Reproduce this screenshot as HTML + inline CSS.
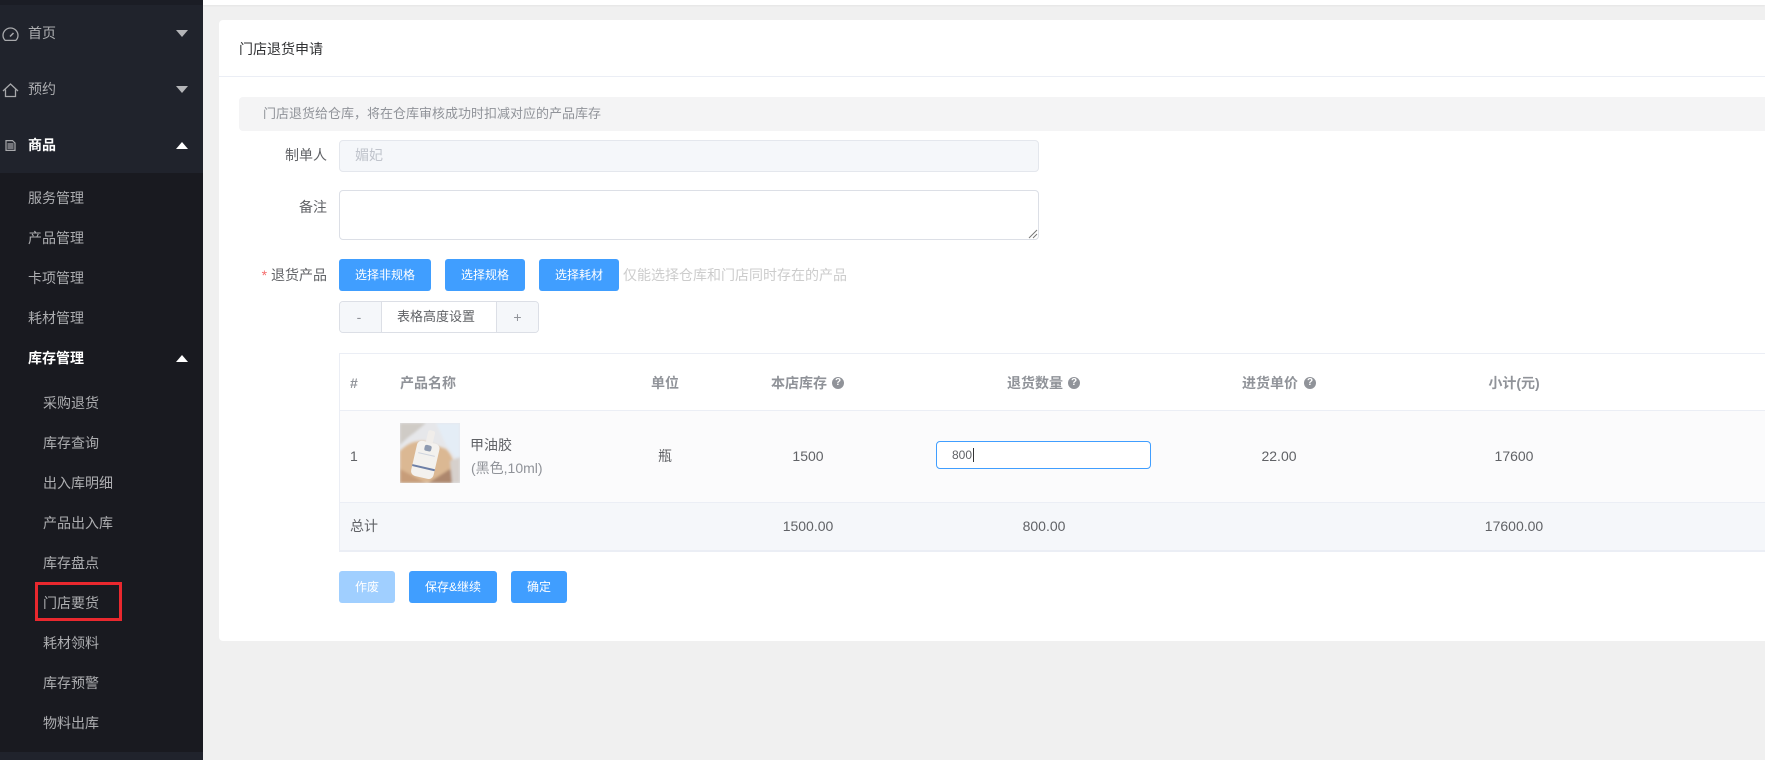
<!DOCTYPE html>
<html lang="zh-CN">
<head>
<meta charset="utf-8">
<title>门店退货申请</title>
<style>
html,body{margin:0;padding:0;width:1765px;height:760px;overflow:hidden;background:#f0f0f0;font-family:"Liberation Sans","Noto Sans CJK SC",sans-serif;font-size:14px;color:#606266}
*{box-sizing:border-box}
.a{position:absolute;white-space:nowrap}
.t{position:absolute;white-space:nowrap;line-height:20px;height:20px}
.c{transform:translateX(-50%)}
#side{position:absolute;left:0;top:0;width:203px;height:760px;background:#20232c;overflow:hidden}
#sub{position:absolute;left:0;top:173px;width:203px;height:579px;background:#191a20}
#side .t{color:#adaeb1;font-size:14px}
.arr{position:absolute;left:176px;width:0;height:0;border-left:6px solid transparent;border-right:6px solid transparent}
.dn{border-top:7px solid #b4b5b8}
.up{border-bottom:7px solid #fff}
.btn{position:absolute;background:#409eff;color:#fff;border-radius:3px;font-size:12px;text-align:center;line-height:32px;height:32px;white-space:nowrap}
.q{position:absolute;width:12px;height:12px;border-radius:50%;background:#909399;color:#fff;font-size:10px;font-weight:bold;line-height:12px;text-align:center;font-family:"Liberation Sans",sans-serif}
.th{font-weight:bold;color:#909399;font-size:14px}
</style>
</head>
<body>
<div class="a" style="left:203px;top:0;width:1562px;height:5px;background:#fff;box-shadow:0 1px 2px rgba(0,0,0,.05)"></div>

<div id="side">
  <div class="a" style="left:0;top:0;width:203px;height:5px;background:#1b1d25"></div>
  <svg class="a" style="left:2px;top:27px" width="17" height="15" viewBox="0 0 17 15" fill="none" stroke="#a8a9ac" stroke-width="1.300"><path d="M3.200 13.400h10.600C15.200 12 16 10.300 16 8.500A7.500 7.500 0 0 0 1 8.500c0 1.800.8 3.500 2.200 4.900z"/><path d="M8 9.500l3.500-3.500" stroke-width="1.500"/></svg>
  <div class="t" style="left:28px;top:23px">首页</div>
  <div class="arr dn" style="top:30px"></div>
  <svg class="a" style="left:2px;top:83px" width="17" height="15" viewBox="0 0 17 15" fill="none" stroke="#a8a9ac" stroke-width="1.300"><path d="M1 8L8.500 1 16 8"/><path d="M3.500 6.500V13.500h10V6.500"/></svg>
  <div class="t" style="left:28px;top:79px">预约</div>
  <div class="arr dn" style="top:86px"></div>
  <svg class="a" style="left:5px;top:140px" width="11" height="11" viewBox="0 0 11 11" fill="none" stroke="#a8a9ac" stroke-width="1.200"><path d="M1 .6h6.500L10 3v7.400H1z"/><path d="M2.500 4h6M2.500 6h6M2.500 8h6"/></svg>
  <div class="t" style="left:28px;top:135px;color:#fff;font-weight:bold">商品</div>
  <div class="arr up" style="top:142px"></div>
  <div id="sub"></div>
  <div class="t" style="left:28px;top:188px">服务管理</div>
  <div class="t" style="left:28px;top:228px">产品管理</div>
  <div class="t" style="left:28px;top:268px">卡项管理</div>
  <div class="t" style="left:28px;top:308px">耗材管理</div>
  <div class="t" style="left:28px;top:348px;color:#fff;font-weight:bold">库存管理</div>
  <div class="arr up" style="top:355px"></div>
  <div class="t" style="left:43px;top:393px">采购退货</div>
  <div class="t" style="left:43px;top:433px">库存查询</div>
  <div class="t" style="left:43px;top:473px">出入库明细</div>
  <div class="t" style="left:43px;top:513px">产品出入库</div>
  <div class="t" style="left:43px;top:553px">库存盘点</div>
  <div class="t" style="left:43px;top:593px">门店要货</div>
  <div class="t" style="left:43px;top:633px">耗材领料</div>
  <div class="t" style="left:43px;top:673px">库存预警</div>
  <div class="t" style="left:43px;top:713px">物料出库</div>
  <div class="a" style="left:35px;top:582px;width:87px;height:39px;border:3px solid #e9282e"></div>
</div>

<div class="a" style="left:219px;top:20px;width:1560px;height:621px;background:#fff;border-radius:4px"></div>
<div class="t" style="left:239px;top:39px;color:#303133;font-size:14px">门店退货申请</div>
<div class="a" style="left:219px;top:76px;width:1546px;height:1px;background:#ebeef5"></div>

<div class="a" style="left:239px;top:97px;width:1530px;height:34px;background:#f4f4f5;border-radius:4px"></div>
<div class="t" style="left:263px;top:103px;color:#909399;font-size:13px">门店退货给仓库<span style="font-family:'Noto Sans CJK TC',sans-serif">，</span>将在仓库审核成功时扣减对应的产品库存</div>

<div class="t" style="right:1438px;top:145px">制单人</div>
<div class="a" style="left:339px;top:140px;width:700px;height:32px;background:#f5f7fa;border:1px solid #e4e7ed;border-radius:4px"></div>
<div class="t" style="left:355px;top:145px;color:#c0c4cc">媚妃</div>

<div class="t" style="right:1438px;top:197px">备注</div>
<div class="a" style="left:339px;top:190px;width:700px;height:50px;background:#fff;border:1px solid #dcdfe6;border-radius:4px"></div>
<svg class="a" style="left:1028px;top:229px" width="10" height="10" viewBox="0 0 10 10" stroke="#777" stroke-width="1"><path d="M1 9L9 1M5 9L9 5"/></svg>

<div class="t" style="right:1438px;top:265px"><span style="color:#f56c6c">* </span>退货产品</div>
<div class="btn" style="left:339px;top:259px;width:92px">选择非规格</div>
<div class="btn" style="left:445px;top:259px;width:80px">选择规格</div>
<div class="btn" style="left:539px;top:259px;width:80px">选择耗材</div>
<div class="t" style="left:623px;top:265px;color:#ccc;font-size:14px">仅能选择仓库和门店同时存在的产品</div>

<div class="a" style="left:339px;top:301px;width:200px;height:32px;border:1px solid #dcdfe6;border-radius:4px;background:#fff;overflow:hidden">
  <div class="a" style="left:0;top:0;width:42px;height:30px;background:#f5f7fa;border-right:1px solid #dcdfe6;text-align:center;line-height:30px;color:#909399;padding-right:3px">-</div>
  <div class="a" style="left:42px;top:0;width:114px;height:30px;text-align:center;line-height:30px;font-size:13px;padding-right:6px">表格高度设置</div>
  <div class="a" style="left:156px;top:0;width:42px;height:30px;background:#f5f7fa;border-left:1px solid #dcdfe6;text-align:center;line-height:30px;color:#909399">+</div>
</div>

<!-- table -->
<div class="a" style="left:339px;top:353px;width:1430px;height:1px;background:#ebeef5"></div>
<div class="a" style="left:339px;top:353px;width:1px;height:199px;background:#ebeef5"></div>
<div class="a" style="left:340px;top:411px;width:1425px;height:91px;background:#fbfbfc"></div>
<div class="a" style="left:340px;top:410px;width:1425px;height:1px;background:#ebeef5"></div>
<div class="a" style="left:340px;top:502px;width:1425px;height:48px;background:#f5f7fa;border-top:1px solid #ebeef5"></div>
<div class="a" style="left:339px;top:550px;width:1426px;height:2px;background:#ebeef5"></div>

<div class="t th" style="left:350px;top:373px">#</div>
<div class="t th" style="left:400px;top:373px">产品名称</div>
<div class="t th c" style="left:665px;top:373px">单位</div>
<div class="t th" style="left:771px;top:373px">本店库存</div><div class="q" style="left:832px;top:377px">?</div>
<div class="t th" style="left:1007px;top:373px">退货数量</div><div class="q" style="left:1068px;top:377px">?</div>
<div class="t th" style="left:1242px;top:373px">进货单价</div><div class="q" style="left:1304px;top:377px">?</div>
<div class="t th c" style="left:1514px;top:373px">小计(元)</div>

<div class="t" style="left:350px;top:446px">1</div>
<svg class="a" style="left:400px;top:423px" width="60" height="60" viewBox="0 0 60 60">
  <defs><filter id="b" x="-10%" y="-10%" width="120%" height="120%"><feGaussianBlur stdDeviation="1.200"/></filter></defs>
  <rect width="60" height="60" fill="#e6e7ea"/>
  <g filter="url(#b)">
    <path d="M36 0H60V40L46 22z" fill="#e4edf6"/>
    <path d="M0 0H26L14 10C8 14 4 18 0 22z" fill="#cfcbc6"/>
    <path d="M0 28C8 20 14 18 24 18L46 26C56 36 56 50 50 60H0z" fill="#dbb893"/>
    <path d="M0 46L26 60H0z" fill="#c79d79"/>
    <path d="M28 60L50 46 56 60z" fill="#ad876d"/>
    <path d="M50 38L60 34V60H52z" fill="#d6d0cc"/>
  </g>
  <g transform="rotate(13 26 36)">
    <rect x="14" y="19" width="23" height="36" rx="5" fill="#f3f1ee"/>
    <rect x="22" y="7" width="7" height="13" rx="2" fill="#f0edea"/>
    <rect x="14" y="44" width="23" height="2" fill="#6d7fa6"/>
    <rect x="22" y="22" width="7" height="6" rx="2" fill="#8e9ab0"/>
    <rect x="17" y="31" width="17" height="1" fill="#cfd4de"/>
  </g>
</svg>
<div class="t" style="left:470px;top:435px;color:#606266">甲油胶</div>
<div class="t" style="left:471px;top:458px;color:#909399">(黑色,10ml)</div>
<div class="t c" style="left:665px;top:446px">瓶</div>
<div class="t c" style="left:808px;top:446px">1500</div>
<div class="a" style="left:936px;top:441px;width:215px;height:28px;background:#fff;border:1px solid #409eff;border-radius:4px"></div>
<div class="t" style="left:952px;top:445px;font-size:12px;line-height:20px;color:#606266">800</div>
<div class="a" style="left:973px;top:448px;width:1px;height:14px;background:#333"></div>
<div class="t c" style="left:1279px;top:446px">22.00</div>
<div class="t c" style="left:1514px;top:446px">17600</div>

<div class="t" style="left:350px;top:516px">总计</div>
<div class="t c" style="left:808px;top:516px">1500.00</div>
<div class="t c" style="left:1044px;top:516px">800.00</div>
<div class="t c" style="left:1514px;top:516px">17600.00</div>

<div class="btn" style="left:339px;top:571px;width:56px;background:#a0cfff">作废</div>
<div class="btn" style="left:409px;top:571px;width:88px">保存&amp;继续</div>
<div class="btn" style="left:511px;top:571px;width:56px">确定</div>
</body>
</html>
